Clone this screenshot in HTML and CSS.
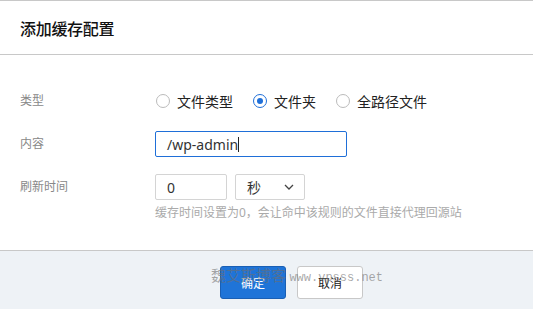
FILE: index.html
```html
<!DOCTYPE html>
<html lang="zh-CN">
<head>
    <meta charset="UTF-8">
    <meta name="viewport" content="width=device-width, initial-scale=1.0">
    <title>添加缓存配置</title>
    <link rel="stylesheet" href="styles.css">
</head>
<body>
    <div class="dialog">
        <div class="dialog-header">
            <h2>添加缓存配置</h2>
        </div>

        <div class="dialog-body">
            <div class="form-row">
                <label class="form-label">类型</label>
                <div class="radios">
                    <span class="radio"><span class="dot"></span>文件类型</span>
                    <span class="radio checked"><span class="dot"></span>文件夹</span>
                    <span class="radio"><span class="dot"></span>全路径文件</span>
                </div>
            </div>

            <div class="form-row">
                <label class="form-label">内容</label>
                <div class="input input-focus">/wp-admin<span class="caret"></span></div>
            </div>

            <div class="form-row top">
                <label class="form-label">刷新时间</label>
                <div class="field">
                    <div class="inline">
                        <div class="input input-num">0</div>
                        <div class="input select">
                            <span>秒</span>
                            <svg width="10" height="6" viewBox="0 0 10 6"><path d="M1 1l4 4 4-4" fill="none" stroke="#444" stroke-width="1.3"/></svg>
                        </div>
                    </div>
                    <p class="hint">缓存时间设置为0，会让命中该规则的文件直接代理回源站</p>
                </div>
            </div>
        </div>

        <div class="dialog-footer">
            <button class="btn btn-primary">确定</button>
            <button class="btn">取消</button>
            <div class="watermark">魏艾斯博客 <span>www.vpsss.net</span></div>
        </div>
    </div>
</body>
</html>
```

FILE: styles.css
```css
body {
    margin: 0;
    background: #fff;
    font-family: "Noto Sans", "Noto Sans CJK SC", sans-serif;
    overflow: hidden;
    height: 309px;
}

.dialog {
    border-top: 1px solid #c8c8c8;
    background: #fff;
}

.dialog-header {
    height: 53px;
    border-bottom: 1px solid #c8c8c8;
    display: flex;
    align-items: center;
    padding-left: 20px;
}

.dialog-header h2 {
    margin: 0;
    font-size: 16px;
    font-weight: 500;
    color: #111;
    letter-spacing: -0.3px;
}

.dialog-body {
    height: 162px;
    padding: 33px 0 0 20px;
}

.form-row {
    display: flex;
    align-items: center;
    margin-bottom: 17px;
}

.form-row.top {
    align-items: flex-start;
}

.form-label {
    width: 135px;
    font-size: 12px;
    color: #888;
    line-height: 26px;
}

.radios {
    display: flex;
    height: 26px;
    align-items: center;
    gap: 19px;
    font-size: 14px;
    color: #222;
}

.radio {
    display: flex;
    align-items: center;
}

.dot {
    width: 12px;
    height: 12px;
    border: 1px solid #bbb;
    border-radius: 50%;
    margin: 0 7px 0 1px;
    position: relative;
}

.radio.checked .dot {
    border-color: #1f6fd8;
}

.radio.checked .dot::after {
    content: "";
    position: absolute;
    left: 3px;
    top: 3px;
    width: 6px;
    height: 6px;
    border-radius: 50%;
    background: #1f6fd8;
}

.input {
    box-sizing: border-box;
    height: 26px;
    border: 1px solid #d4d4d4;
    border-radius: 2px;
    padding-left: 11px;
    font-size: 14px;
    color: #333;
    display: flex;
    align-items: center;
}

.input-focus {
    width: 192px;
    border-color: #1f6fd8;
}

.caret {
    width: 1px;
    height: 15px;
    background: #222;
}

.inline {
    display: flex;
    gap: 8px;
}

.input-num {
    width: 72px;
}

.select {
    width: 70px;
    justify-content: space-between;
    padding-right: 10px;
}

.hint {
    margin: 5px 0 0;
    font-size: 12px;
    color: #aaa;
    line-height: 16px;
}

.dialog-footer {
    position: relative;
    box-sizing: border-box;
    height: 59px;
    border-top: 1px solid #c8c8c8;
    background: #eef2f6;
    display: flex;
    justify-content: center;
    align-items: flex-start;
    gap: 11px;
    padding: 15px 0 0 50px;
}

.btn {
    width: 66px;
    height: 33px;
    border: 1px solid #c8c8c8;
    border-radius: 3px;
    background: #fff;
    font-family: inherit;
    font-size: 12px;
    color: #222;
}

.btn-primary {
    background: #1f74d8;
    border-color: #1a5fb4;
    color: #fff;
}

.watermark {
    position: absolute;
    left: 211px;
    top: 13px;
    font-family: "Noto Sans CJK SC", serif;
    font-size: 15px;
    color: rgba(110, 110, 110, 0.6);
    white-space: nowrap;
}

.watermark span {
    font-family: "Liberation Mono", monospace;
    font-size: 12px;
}
```
